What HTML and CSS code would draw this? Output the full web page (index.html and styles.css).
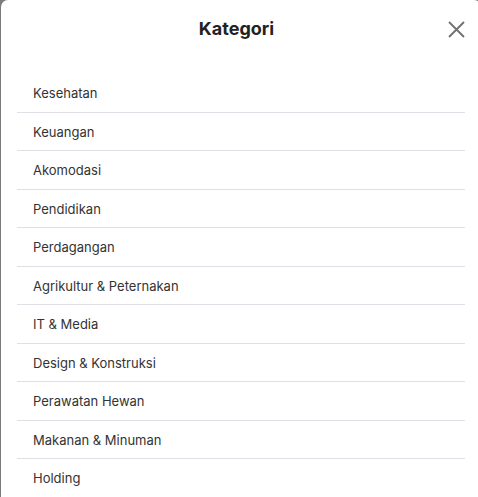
FILE: index.html
```html
<!DOCTYPE html>
<html lang="id">
<head>
<meta charset="utf-8">
<title>Kategori</title>
<link rel="stylesheet" href="styles.css">
</head>
<body>
<div class="modal">
  <div class="header">
    <h1 class="title">Kategori</h1>
    <button class="close" aria-label="Tutup">
      <svg width="17" height="17" viewBox="0 0 17 17"><path d="M1 1L16 16M16 1L1 16" stroke="#707070" stroke-width="1.8" fill="none"/></svg>
    </button>
  </div>
  <ul class="list">
    <li class="item">Kesehatan</li>
    <li class="item">Keuangan</li>
    <li class="item">Akomodasi</li>
    <li class="item">Pendidikan</li>
    <li class="item">Perdagangan</li>
    <li class="item">Agrikultur &amp; Peternakan</li>
    <li class="item">IT &amp; Media</li>
    <li class="item">Design &amp; Konstruksi</li>
    <li class="item">Perawatan Hewan</li>
    <li class="item">Makanan &amp; Minuman</li>
    <li class="item">Holding</li>
  </ul>
</div>
</body>
</html>
```

FILE: styles.css
```css
html, body {
  margin: 0;
  padding: 0;
  height: 100%;
  overflow: hidden;
}
body {
  background: #7b7b7b;
  font-family: Inter, "Noto Sans", sans-serif;
}
.modal {
  margin-left: 1px;
  width: 480px;
  height: 520px;
  background: #fff;
  border-radius: 7px 7px 0 0;
  box-sizing: border-box;
  padding: 0 16px;
}
.header {
  position: relative;
  height: 74px;
  display: flex;
  align-items: flex-start;
  justify-content: center;
  padding-right: 9px;
}
.title {
  margin: 18px 0 0 0;
  font-size: 18px;
  font-weight: 700;
  line-height: 22px;
  color: #222;
}
.close {
  position: absolute;
  right: 0;
  top: 20.5px;
  width: 17px;
  height: 17px;
  padding: 0;
  border: 0;
  background: none;
  display: flex;
}
.list {
  list-style: none;
  margin: 0;
  padding: 0;
}
.item {
  box-sizing: border-box;
  height: 38.5px;
  line-height: 36px;
  padding: 1px 0 0 16px;
  font-size: 13px;
  color: #333;
  border-bottom: 1px solid #dfe0e6;
}
.item:last-child {
  border-bottom: 0;
}
```
